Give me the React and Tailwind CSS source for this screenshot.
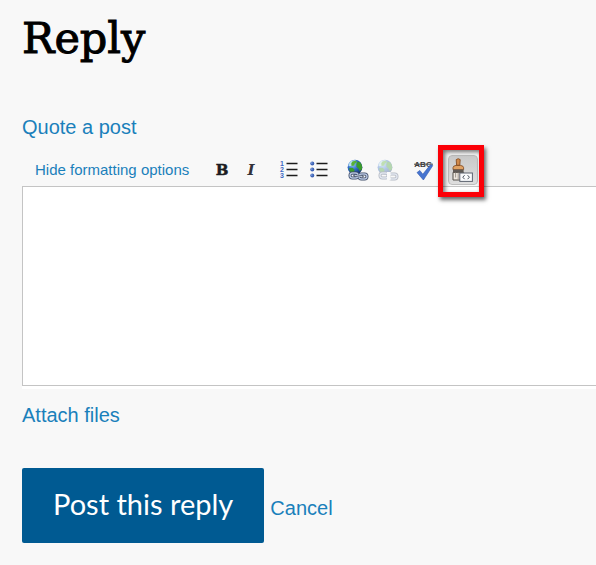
import React, { useState } from "react";

const GLYPH_FONT = { fontFamily: '"DejaVu Serif", serif' };

const ToolButton = ({ label, faded, raised, children }) => (
    <button
        type="button"
        aria-label={label}
        className={
            raised
                ? "block w-[30px] h-[30px] rounded border border-[#bdbdbd] bg-linear-to-b from-[#c9c9c9] to-[#dedede]"
                : "block w-[30px] h-[30px]"
        }
    >
        <svg
            viewBox={raised ? "1 1 28 28" : "0 0 30 30"}
            className={faded ? "w-full h-full opacity-35" : "w-full h-full"}
        >
            {children}
        </svg>
    </button>
);

const Globe = ({ id }) => (
    <>
        <defs>
            <radialGradient id={id} cx="0.35" cy="0.3" r="0.75">
                <stop offset="0" stopColor="#9ccaf8" />
                <stop offset="0.5" stopColor="#2f6cc6" />
                <stop offset="1" stopColor="#12306e" />
            </radialGradient>
        </defs>
        <circle cx="13" cy="12.2" r="7.4" fill={`url(#${id})`} />
        <path d="M7.6 7.6C9 5.8 11.6 5 14 5.4L13.2 7.4L10.8 8.4L10 10.4L7.8 11.2L6.4 10.4Z" fill="#b9dff0" />
        <path d="M10.4 6.4L14 5.6L15 7.2L12.8 8.6L12.2 10.6L9.6 11L9.2 8.6Z" fill="#57b136" />
        <path d="M15.6 6.6L18.2 7.4C20 9.4 20.6 12 19.8 14.6L17.6 16L16.4 13.4L14.4 11.8L14.4 9Z" fill="#3a9a2c" />
        <path d="M7.2 13L10.6 12.8L12.6 14.8L12 17.4L10.6 18.6C8.6 17.6 7.2 15.4 7.2 13Z" fill="#3a9a2c" />
    </>
);

const Chain = ({ broken }) => (
    <g fill="none">
        <g stroke="#3c4a66" strokeWidth="3">
            <rect x="8" y="18" width="8" height="5" rx="2.5" />
            <rect x="17" y="19" width="8" height="5" rx="2.5" />
        </g>
        <g stroke="#b4c2dd" strokeWidth="1.4">
            <rect x="8" y="18" width="8" height="5" rx="2.5" />
            <rect x="17" y="19" width="8" height="5" rx="2.5" />
        </g>
        {broken ? (
            <path d="M15 21H18.6" stroke="#ffffff" strokeWidth="8" />
        ) : (
            <>
                <path d="M12.5 20.6L20.5 21.4" stroke="#3c4a66" strokeWidth="2.4" strokeLinecap="round" />
                <path d="M13 20.6L20 21.4" stroke="#dfe6f2" strokeWidth="1" strokeLinecap="round" />
            </>
        )}
    </g>
);

const Lines = () => (
    <path d="M12.5 8.5H23.5M12.5 14.5H23.5M12.5 20.5H23.5" stroke="#1c1c1c" strokeWidth="1.4" />
);

const Toolbar = () => (
    <div role="toolbar" aria-label="Formatting" className="flex gap-2">
        <div className="flex">
            <ToolButton label="Bold">
                <text x="16" y="20" textAnchor="middle" fontSize="15" fontWeight="700" fill="#1c1c22" stroke="#1c1c22" strokeWidth="0.5" style={GLYPH_FONT}>
                    B
                </text>
            </ToolButton>
            <ToolButton label="Italic">
                <text x="15" y="20" textAnchor="middle" fontSize="15" fontWeight="700" fontStyle="italic" fill="#33333a" style={GLYPH_FONT}>
                    I
                </text>
            </ToolButton>
        </div>
        <div className="flex">
            <ToolButton label="Numbered list">
                <g fontSize="7" fontWeight="700" fill="#3d68c4" fontFamily="Liberation Sans, sans-serif">
                    <text x="6" y="11">1</text>
                    <text x="6" y="17">2</text>
                    <text x="6" y="23">3</text>
                </g>
                <Lines />
            </ToolButton>
            <ToolButton label="Bulleted list">
                {[8.5, 14.5, 20.5].map((y) => (
                    <g key={y}>
                        <circle cx="8.3" cy={y} r="2" fill="#3d62b4" />
                        <circle cx="7.8" cy={y - 0.5} r="0.8" fill="#8fb0ec" />
                    </g>
                ))}
                <Lines />
            </ToolButton>
        </div>
        <div className="flex">
            <ToolButton label="Insert link">
                <Globe id="globe-link" />
                <Chain />
            </ToolButton>
            <ToolButton label="Remove link" faded>
                <Globe id="globe-unlink" />
                <Chain broken />
            </ToolButton>
        </div>
        <ToolButton label="Check spelling">
            <text x="13" y="12" textAnchor="middle" fontSize="8" fontWeight="700" fill="#3a3a3a" fontFamily="Liberation Sans, sans-serif">
                ABC
            </text>
            <path d="M4 9.2H23" stroke="#4a4a4a" strokeWidth="1" />
            <path d="M7 17.6L9.8 15.4L12.8 19.2L20.6 9.6L22.8 10.6L13.4 25Z" fill="#4674d0" stroke="#2f58ac" strokeWidth="0.6" />
        </ToolButton>
        <div className="relative">
            <ToolButton label="Edit source" raised>
                <path d="M8.2 4.6Q10.2 2.8 12.2 4.6L11.8 10.4H8.6Z" fill="#d08a4c" stroke="#7c4318" strokeWidth="0.8" />
                <path d="M5 14.6V12.6Q5 10.8 8 10.4H12.4Q15.6 10.8 15.6 12.6V14.6Z" fill="#e0a264" stroke="#7c4318" strokeWidth="0.8" />
                <path d="M5 14.6H15.6V17.4H5Z" fill="#5f5a56" />
                <path d="M5 17.4H15.6V25H5Z" fill="#eee8e0" stroke="#55504a" strokeWidth="1" />
                <path d="M7.6 17.4V22.5M10.2 17.4V24.5" stroke="#8a8178" strokeWidth="0.8" />
                <rect x="11.8" y="18" width="12.6" height="8.4" fill="#f9fafc" stroke="#5c636f" strokeWidth="1" />
                <path d="M16.6 20.2L14.8 22.2L16.6 24.2M19.6 20.2L21.4 22.2L19.6 24.2" fill="none" stroke="#4b525e" strokeWidth="1" />
            </ToolButton>
            {/* red frame that calls out the source button */}
            <span className="pointer-events-none absolute -left-[10px] -top-[10px] z-10 w-[46px] h-[52px] border-[5px] border-[#fb0007] shadow-[2px_3px_4px_rgba(0,0,0,0.6),inset_2px_2px_4px_rgba(0,0,0,0.55)]" />
        </div>
    </div>
);

const App = () => {
    const [message, setMessage] = useState("");

    return (
        <main className="min-h-screen bg-[#f8f8f8] pl-[22px] pt-2 pb-[22px] font-['Liberation_Sans',Arial,sans-serif] text-xl leading-6 text-[#1a80bb]">
            <h1 className="font-['DejaVu_Serif',serif] text-[43px] leading-[60px] text-black [-webkit-text-stroke:1px_black]">
                Reply
            </h1>

            <a href="#quote" className="mt-[47px] block w-fit">
                Quote a post
            </a>

            <form onSubmit={(e) => e.preventDefault()}>
                <div className="mt-4 flex items-center gap-[17px] pb-px pl-[13px]">
                    <a href="#formatting" className="whitespace-nowrap text-[15px]">
                        Hide formatting options
                    </a>
                    <Toolbar />
                </div>

                <div className="bg-white pb-[3px]">
                    <textarea
                        aria-label="Reply"
                        value={message}
                        onChange={(e) => setMessage(e.target.value)}
                        className="block h-[200px] w-full resize-none border border-r-0 border-[#c4c4c4] bg-white p-2 text-base text-black outline-none"
                    />
                </div>

                <a href="#attach" className="mt-[14px] block w-fit">
                    Attach files
                </a>

                <div className="mt-[41px] flex items-baseline gap-[6px]">
                    <button
                        type="submit"
                        className="rounded-[2px] bg-[#005a92] px-[31px] pt-4 pb-5 font-['Lato',sans-serif] text-[29px] leading-[39px] text-white"
                    >
                        Post this reply
                    </button>
                    <a href="#cancel">Cancel</a>
                </div>
            </form>
        </main>
    );
};

export default App;
